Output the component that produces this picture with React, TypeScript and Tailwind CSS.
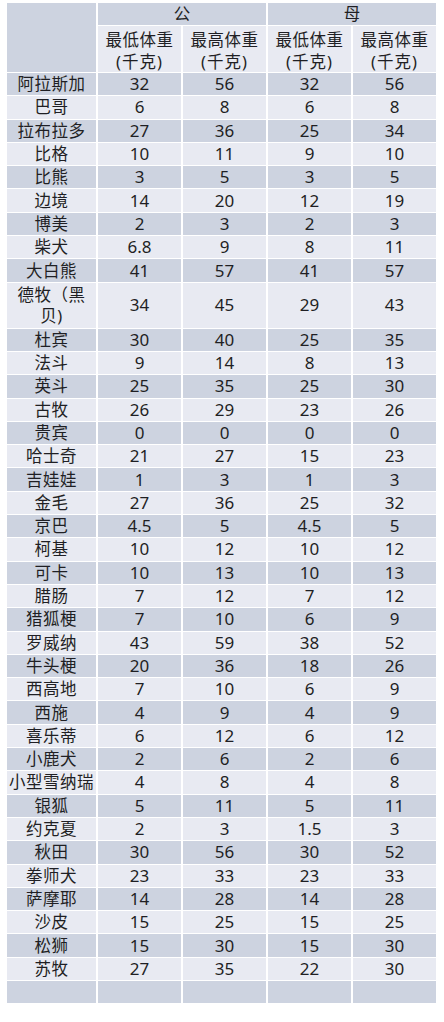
const rows: [string, string, string, string, string][] = [
  ['阿拉斯加', '32', '56', '32', '56'],
  ['巴哥', '6', '8', '6', '8'],
  ['拉布拉多', '27', '36', '25', '34'],
  ['比格', '10', '11', '9', '10'],
  ['比熊', '3', '5', '3', '5'],
  ['边境', '14', '20', '12', '19'],
  ['博美', '2', '3', '2', '3'],
  ['柴犬', '6.8', '9', '8', '11'],
  ['大白熊', '41', '57', '41', '57'],
  ['德牧（黑贝)', '34', '45', '29', '43'],
  ['杜宾', '30', '40', '25', '35'],
  ['法斗', '9', '14', '8', '13'],
  ['英斗', '25', '35', '25', '30'],
  ['古牧', '26', '29', '23', '26'],
  ['贵宾', '0', '0', '0', '0'],
  ['哈士奇', '21', '27', '15', '23'],
  ['吉娃娃', '1', '3', '1', '3'],
  ['金毛', '27', '36', '25', '32'],
  ['京巴', '4.5', '5', '4.5', '5'],
  ['柯基', '10', '12', '10', '12'],
  ['可卡', '10', '13', '10', '13'],
  ['腊肠', '7', '12', '7', '12'],
  ['猎狐梗', '7', '10', '6', '9'],
  ['罗威纳', '43', '59', '38', '52'],
  ['牛头梗', '20', '36', '18', '26'],
  ['西高地', '7', '10', '6', '9'],
  ['西施', '4', '9', '4', '9'],
  ['喜乐蒂', '6', '12', '6', '12'],
  ['小鹿犬', '2', '6', '2', '6'],
  ['小型雪纳瑞', '4', '8', '4', '8'],
  ['银狐', '5', '11', '5', '11'],
  ['约克夏', '2', '3', '1.5', '3'],
  ['秋田', '30', '56', '30', '52'],
  ['拳师犬', '23', '33', '23', '33'],
  ['萨摩耶', '14', '28', '14', '28'],
  ['沙皮', '15', '25', '15', '25'],
  ['松狮', '15', '30', '15', '30'],
  ['苏牧', '27', '35', '22', '30'],
];

const dark = 'bg-[#cdd3e0]';
const light = 'bg-[#e8eaf2]';

function Cell({ children, bg, tall }: { children?: React.ReactNode; bg: string; tall?: boolean }) {
  return (
    <div className={`${bg} ${tall ? 'h-[45px]' : 'h-[22.3px]'} flex items-center justify-center text-center leading-[22px]`}>
      {children}
    </div>
  );
}

export default function App() {
  return (
    <div
      className="w-[444px] h-[1022px] bg-white pt-[3px] pl-[7px] text-[16.5px] text-[#1f1f24]"
      style={{ fontFamily: '"Noto Sans", "Noto Sans CJK SC", sans-serif' }}
    >
      <div className="w-[429px] grid grid-cols-[89px_repeat(4,1fr)] gap-x-[2px] gap-y-px">
        <div className={`${dark} row-span-2`} />
        <div className={`${dark} col-span-2 h-[22px] flex items-center justify-center`}>公</div>
        <div className={`${dark} col-span-2 h-[22px] flex items-center justify-center`}>母</div>
        {['最低体重', '最高体重', '最低体重', '最高体重'].map((t, i) => (
          <div key={i} className={`${light} h-[46px] flex flex-col items-center justify-center pt-[4px] leading-[22px]`}>
            <span className="tracking-[0.5px]">{t}</span>
            <span className="tracking-[1px]">(千克)</span>
          </div>
        ))}
        {rows.map((r, i) => {
          const bg = i % 2 === 0 ? dark : light;
          const tall = r[0].length > 5;
          return (
            <div key={r[0]} className="contents">
              <Cell bg={bg} tall={tall}>
                {tall ? (
                  <div className="flex flex-col items-center leading-[21px] tracking-[0.5px]">
                    <span>德牧（黑</span>
                    <span>贝)</span>
                  </div>
                ) : (
                  <span className="whitespace-nowrap tracking-[0.5px]">{r[0]}</span>
                )}
              </Cell>
              {r.slice(1).map((v, j) => (
                <Cell key={j} bg={bg} tall={tall}>
                  <span className="text-[17px]">{v}</span>
                </Cell>
              ))}
            </div>
          );
        })}
        {[0, 1, 2, 3, 4].map((k) => (
          <Cell key={k} bg={dark} />
        ))}
      </div>
    </div>
  );
}
